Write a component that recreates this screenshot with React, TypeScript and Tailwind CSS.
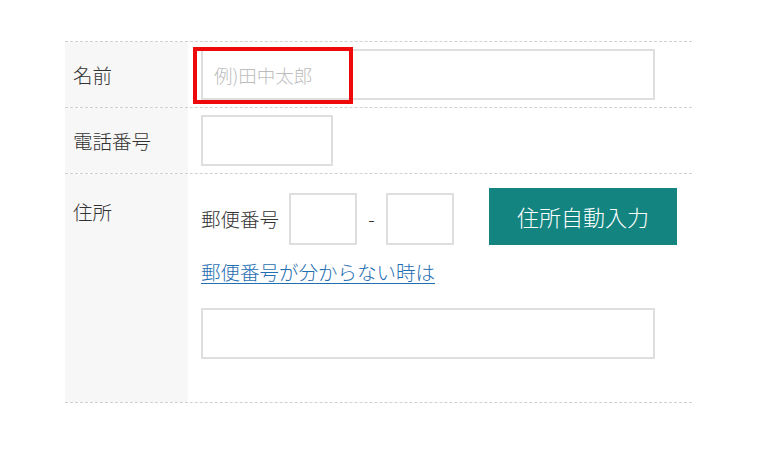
import React from "react";

const font = { fontFamily: '"Noto Sans CJK JP", "Noto Sans", sans-serif' };

export default function App() {
  return (
    <div className="w-[760px] h-[449px] bg-white pt-[41px]" style={font}>
      <div className="ml-[65px] w-[627px] text-[#333] text-[19.5px] font-light border-b border-dashed border-[#d0d0d0]">
        {/* Row 1 */}
        <div className="flex border-t border-dashed border-[#d0d0d0]">
          <div className="w-[123px] bg-[#f7f7f7] pl-[8px] flex items-center">名前</div>
          <div className="relative flex-1 pl-[13px] py-[7px]">
            <input
              className="block w-[454px] h-[51px] border-2 border-[#dedede] px-[11px] text-[18.5px] font-light placeholder:text-[#bdbdbd] outline-none"
              placeholder="例)田中太郎"
              style={font}
            />
            <div className="absolute left-[5px] top-[5px] w-[160px] h-[57px] border-4 border-[#ee0a0a] pointer-events-none" />
          </div>
        </div>
        {/* Row 2 */}
        <div className="flex border-t border-dashed border-[#d0d0d0]">
          <div className="w-[123px] bg-[#f7f7f7] pl-[8px] flex items-center">電話番号</div>
          <div className="flex-1 pl-[13px] py-[7px]">
            <input className="block w-[132px] h-[51px] border-2 border-[#dedede] outline-none" />
          </div>
        </div>
        {/* Row 3 */}
        <div className="flex border-t border-dashed border-[#d0d0d0]">
          <div className="w-[123px] bg-[#f7f7f7] pl-[8px] pt-[24px] leading-[28px]">住所</div>
          <div className="flex-1 pl-[13px] pt-[14px] pb-[43px]">
            <div className="flex items-end h-[57px]">
              <span className="self-center pt-[4px] mr-[10px]">郵便番号</span>
              <input className="block w-[68px] h-[52px] border-2 border-[#dedede] outline-none" />
              <span className="w-[29px] text-center self-center pt-[4px]">-</span>
              <input className="block w-[68px] h-[52px] border-2 border-[#dedede] outline-none" />
              <button
                className="ml-[35px] w-[188px] h-[57px] bg-[#13847f] text-white text-[22px] font-light flex items-center justify-center"
                style={font}
              >
                住所自動入力
              </button>
            </div>
            <a href="#" className="block mt-[13px] leading-[28px] text-[#1f6fb2] underline underline-offset-[3px] w-max">
              郵便番号が分からない時は
            </a>
            <input className="block mt-[22px] w-[454px] h-[51px] border-2 border-[#dedede] outline-none" />
          </div>
        </div>
      </div>
    </div>
  );
}
